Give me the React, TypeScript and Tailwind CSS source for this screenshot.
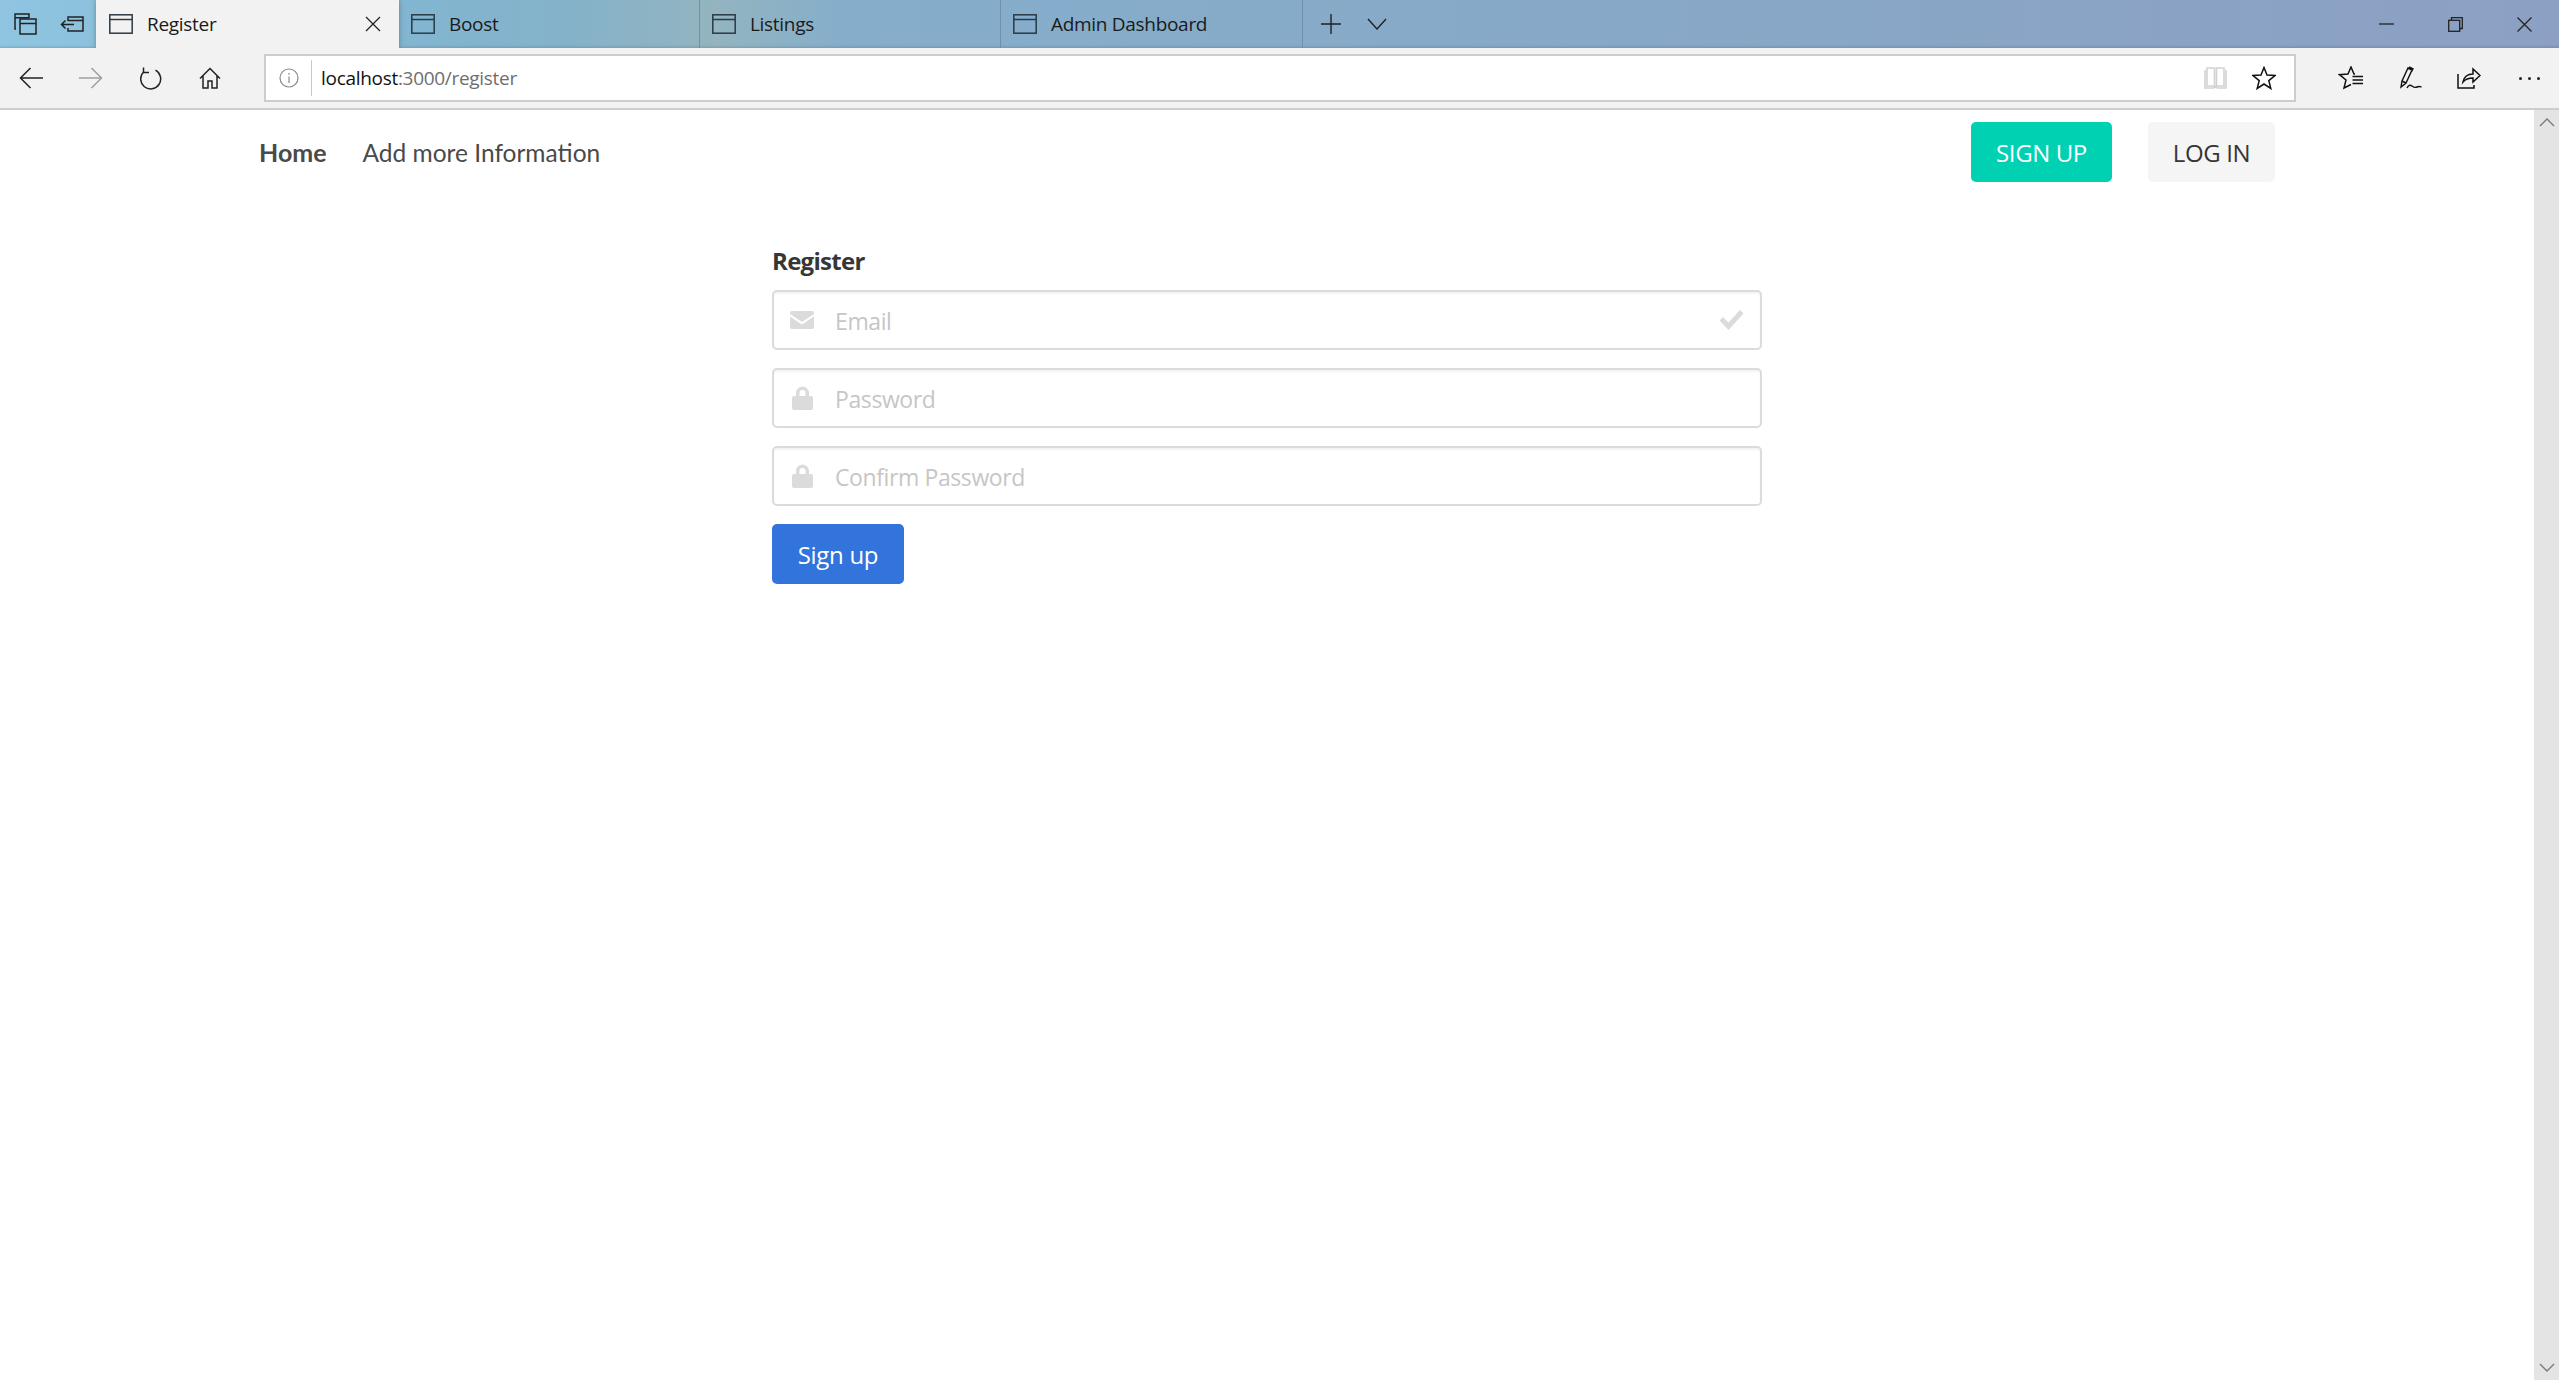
import React from 'react';

const segoe = "font-['Open_Sans',sans-serif]";

function TabIcon() {
  return (
    <svg width="24" height="20" viewBox="0 0 24 20" fill="none" stroke="#2b3a44" strokeWidth="1.5" className="shrink-0">
      <rect x="0.8" y="0.8" width="22.4" height="18.4" />
      <path d="M1 5.500h22" />
    </svg>
  );
}

function Tab({ label, active, divider, width }: { label: string; active?: boolean; divider?: boolean; width: string }) {
  return (
    <div
      className={`flex h-12 items-center ${width} ${active ? 'relative z-10 bg-[#f2f2f2] pl-[13px] shadow-[0_0_5px_rgba(0,0,0,0.3)]' : 'pl-[12px]'} ${divider ? 'border-r border-[#6f90ad]' : ''}`}
    >
      <TabIcon />
      <span className={`ml-[14px] text-[19px] tracking-[-0.3px] text-[#1a1a1a] ${segoe}`}>{label}</span>
      {active && (
        <svg width="16" height="16" viewBox="0 0 16 16" stroke="#222" strokeWidth="1.3" className="ml-auto mr-[18px]">
          <path d="M1 1l14 14M15 1L1 15" />
        </svg>
      )}
    </div>
  );
}

function TabStrip() {
  return (
    <div className="flex h-12 items-center overflow-hidden bg-[linear-gradient(90deg,#8fc5e0_0%,#82b6d2_15%,#84b2ca_22%,#93b4c0_28%,#85aecb_33%,#86abc9_50%,#8ca0c3_100%)] shadow-[inset_0_-3px_3px_-2px_rgba(0,0,0,0.15)]">
      <div className="flex w-[96px] items-center">
        <svg width="23" height="22" viewBox="0 0 23 22" fill="none" stroke="#222" strokeWidth="1.5" className="ml-[14px]">
          <path d="M2 16H1V1h14v4M1 4.800h14" />
          <rect x="6" y="6" width="16" height="15" />
          <path d="M6 10.500h16" />
        </svg>
        <svg width="24" height="16" viewBox="0 0 24 16" fill="none" stroke="#222" strokeWidth="1.5" className="ml-[23px]">
          <path d="M8 5V1h15v14H8v-3M8 4.500h15M14 8.500H1.500M5.500 4.500l-4 4 4 4" />
        </svg>
      </div>
      <Tab label="Register" active width="w-[303px]" />
      <Tab label="Boost" divider width="w-[301px]" />
      <Tab label="Listings" divider width="w-[301px]" />
      <Tab label="Admin Dashboard" divider width="w-[302px]" />
      <svg width="20" height="20" viewBox="0 0 20 20" stroke="#222" strokeWidth="1.4" className="ml-[18px]">
        <path d="M10 0v20M0 10h20" />
      </svg>
      <svg width="20" height="12" viewBox="0 0 20 12" fill="none" stroke="#222" strokeWidth="1.4" className="ml-[26px]">
        <path d="M1 1l9 10 9-10" />
      </svg>
      <div className="ml-auto flex items-center">
        <svg width="15" height="2" viewBox="0 0 15 2" className="mr-[54px]">
          <path d="M0 1h15" stroke="#222" strokeWidth="1.3" />
        </svg>
        <svg width="15" height="15" viewBox="0 0 15 15" fill="none" stroke="#222" strokeWidth="1.3" className="mr-[54px]">
          <rect x="0.700" y="3.300" width="11" height="11" />
          <path d="M3.500 3V0.700h10.800v10.800H12" />
        </svg>
        <svg width="15" height="15" viewBox="0 0 15 15" stroke="#222" strokeWidth="1.3" className="mr-[27px]">
          <path d="M0.500 0.500l14 14M14.500 0.500l-14 14" />
        </svg>
      </div>
    </div>
  );
}

function Toolbar() {
  return (
    <div className="flex h-[62px] items-start border-b-2 border-[#cdcdcd] bg-[#f2f2f2] pt-[6px]">
      <div className="flex h-12 w-[264px] items-center">
        <svg width="24" height="22" viewBox="0 0 24 22" fill="none" stroke="#222" strokeWidth="1.5" className="ml-[19px]">
          <path d="M24 11H1.500M11.500 1l-10 10 10 10" />
        </svg>
        <svg width="24" height="22" viewBox="0 0 24 22" fill="none" stroke="#a0a0a0" strokeWidth="1.5" className="ml-[36px]">
          <path d="M0 11h22.500M12.500 1l10 10-10 10" />
        </svg>
        <svg width="22" height="23" viewBox="0 0 22 23" fill="none" stroke="#222" strokeWidth="1.5" className="ml-[37px]">
          <path d="M15.500 3.200A10 10 0 1 1 3.500 5M3.500 0.500V5.500H9" />
        </svg>
        <svg width="22" height="22" viewBox="0 0 22 22" fill="none" stroke="#222" strokeWidth="1.5" className="ml-[37px]">
          <path d="M1 11.500L11 1.500l10 10M4 8.500V21h5v-7h4v7h5V8.500" />
        </svg>
      </div>
      <div className="flex h-12 w-[2032px] items-center border-2 border-[#cdcdcd] bg-white">
        <svg width="20" height="20" viewBox="0 0 20 20" fill="none" stroke="#8a8a8a" strokeWidth="1.2" className="ml-[13px]">
          <circle cx="10" cy="10" r="9" />
          <path d="M10 8.500V15M10 5v1.800" />
        </svg>
        <div className="ml-[12px] h-[36px] w-px bg-[#c8c8c8]" />
        <span className={`ml-[9px] text-[19px] tracking-[-0.3px] ${segoe}`}>
          <span className="text-[#111]">localhost</span>
          <span className="text-[#6e6e6e]">:3000/register</span>
        </span>
        <svg width="23" height="22" viewBox="0 0 23 22" fill="none" stroke="#d2d2d2" strokeWidth="1.6" className="ml-auto">
          <path d="M3 1h7.500v18H3zM12.500 1H20v18h-7.500zM1 3v18h8.500l2 -1 2 1H22V3" />
        </svg>
        <svg width="24" height="24" viewBox="0 0 24 24" fill="none" stroke="#111" strokeWidth="1.5" className="ml-[25px] mr-[18px]">
          <path d="M12 1.500l3 7.500 8 .5-6.200 5.100 2 7.900L12 18l-6.800 4.500 2-7.900L1 9.500l8-.5z" />
        </svg>
      </div>
      <div className="flex h-12 flex-1 items-center">
        <svg width="25" height="24" viewBox="0 0 25 24" fill="none" stroke="#111" strokeWidth="1.5" className="ml-[42px]">
          <path d="M17 8l-1 0-3-7-3 7-8.500.7 6.500 5.300-2 8L13 18.500M14.500 10.500H25M14.500 14H25M14.500 17.500H25" />
        </svg>
        <svg width="22" height="24" viewBox="0 0 22 24" fill="none" stroke="#111" strokeWidth="1.4" className="ml-[37px]">
          <path d="M1 21l1-6 6-13 4 2-6 13zM2 15l4 2M9 1l4 1.800-1.500 3M7 22c1.500-3 3-3.500 5-2s3 2 5 1 3-.500 4.500 0" />
        </svg>
        <svg width="24" height="22" viewBox="0 0 24 22" fill="none" stroke="#111" strokeWidth="1.5" className="ml-[35px]">
          <path d="M1 7v14h16v-3M6 15c1-5 4-8 10-8V2l7 6.500-7 6.500v-4c-4 0-7 .5-10 4z" />
        </svg>
        <div className="ml-[38px] flex gap-[6px]">
          <span className="size-[3px] rounded-full bg-[#222]" />
          <span className="size-[3px] rounded-full bg-[#222]" />
          <span className="size-[3px] rounded-full bg-[#222]" />
        </div>
      </div>
    </div>
  );
}

function Field({ placeholder, icon, check }: { placeholder: string; icon: React.ReactNode; check?: boolean }) {
  return (
    <div className="flex h-[60px] items-center rounded-[5px] border-2 border-[#dbdbdb] shadow-[inset_0_2px_2px_rgba(10,10,10,0.05)]">
      <div className="flex w-[56px] shrink-0 justify-center">{icon}</div>
      <input
        readOnly
        placeholder={placeholder}
        className={`ml-[5px] min-w-0 flex-1 bg-transparent pt-[2px] text-[23px] tracking-[-0.4px] outline-none placeholder:text-[#c6c6c6] ${segoe}`}
      />
      {check && (
        <svg width="25" height="20" viewBox="0 0 24 20" fill="#dbdbdb" className="mr-[16px] shrink-0">
          <path d="M0 10.500l3.500-3.500 5.500 5.500L20.500 0 24 3.500 9 20z" />
        </svg>
      )}
    </div>
  );
}

const envelope = (
  <svg width="24" height="18" viewBox="0 0 24 18" fill="#dbdbdb">
    <path d="M2 0h20a2 2 0 0 1 2 2v1L12 11 0 3V2a2 2 0 0 1 2-2zM0 5.500l12 8 12-8V16a2 2 0 0 1-2 2H2a2 2 0 0 1-2-2z" />
  </svg>
);

const lock = (
  <svg width="21" height="24" viewBox="0 0 21 24" fill="#dbdbdb">
    <path d="M4 10V7a6.500 6.500 0 0 1 13 0v3h2a2 2 0 0 1 2 2v10a2 2 0 0 1-2 2H2a2 2 0 0 1-2-2V12a2 2 0 0 1 2-2zm3.500 0h6V7a3 3 0 0 0-6 0z" />
  </svg>
);

function Page() {
  return (
    <div className="min-w-0 flex-1 bg-white">
      <nav className="mx-auto mt-3 flex h-[60px] w-[2016px] items-center font-['Lato',sans-serif] text-[24.5px] text-[#4a4a4a]">
        <span className="pt-[2px] text-[25px] font-bold">Home</span>
        <span className="ml-[36px] pt-[2px]">Add more Information</span>
        <div className={`ml-auto flex gap-[36px] text-[24px] tracking-[-0.4px] ${segoe}`}>
          <div className="flex h-[60px] w-[141px] items-center justify-center rounded-[5px] bg-[#00d1b2] pt-[2px] text-white">SIGN UP</div>
          <div className="flex h-[60px] w-[127px] items-center justify-center rounded-[5px] bg-[#f5f5f5] pt-[2px] text-[#363636]">LOG IN</div>
        </div>
      </nav>
      <form className={`mx-auto mt-[62px] flex w-[990px] flex-col ${segoe}`}>
        <label className="mb-[10px] h-[36px] text-[24px] leading-[34px] font-bold tracking-[-0.7px] text-[#363636]">Register</label>
        <div className="flex flex-col gap-[18px]">
          <Field placeholder="Email" icon={envelope} check />
          <Field placeholder="Password" icon={lock} />
          <Field placeholder="Confirm Password" icon={lock} />
          <button type="button" className="h-[60px] w-[132px] rounded-[5px] bg-[#3273dc] pt-[1px] text-[24px] tracking-[-0.3px] text-white">
            Sign up
          </button>
        </div>
      </form>
    </div>
  );
}

function Scrollbar() {
  return (
    <div className="flex w-[25px] shrink-0 flex-col items-center justify-between bg-[#e4e4e4] py-[8px]">
      <svg width="16" height="9" viewBox="0 0 16 9" fill="none" stroke="#7a7a7a" strokeWidth="1.4">
        <path d="M1 8l7-7 7 7" />
      </svg>
      <svg width="16" height="9" viewBox="0 0 16 9" fill="none" stroke="#7a7a7a" strokeWidth="1.4">
        <path d="M1 1l7 7 7-7" />
      </svg>
    </div>
  );
}

export default function App() {
  return (
    <div className="flex h-[1380px] w-full flex-col overflow-hidden bg-white">
      <TabStrip />
      <Toolbar />
      <div className="flex min-h-0 flex-1">
        <Page />
        <Scrollbar />
      </div>
    </div>
  );
}
